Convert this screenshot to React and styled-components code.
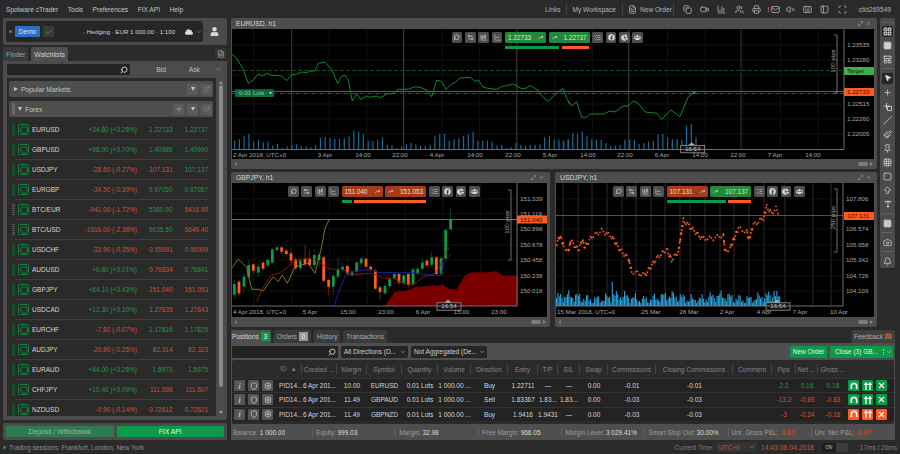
import styled, { createGlobalStyle } from "styled-components";
import {
  Search, Settings2, ChartCandlestick, ChartLine, ListChecks, Copy, Video, Users, Printer, Mail, VolumeX,
  Keyboard, PanelLeft, Plus, X, Check, ChevronDown, Bell, Camera, Type, ArrowBigUp, Square, Pin, Slash,
  LayoutGrid, Shield, Settings, MousePointer2, Grid3x3, LayoutPanelTop, Paintbrush, ExternalLink, FileText,
  Maximize2, BarChart3, TrendingUp, Scan, MessageSquare,
} from "lucide-react";
import { FaFacebook, FaChartPie, FaUsers, FaUser, FaCloud } from "react-icons/fa";

const GREEN = "#209a46";
const RED = "#d84e2c";
const BRIGHT_GREEN = "#0a9a4a";
const ORANGE = "#ff5a1f";

const GlobalStyle = createGlobalStyle`
  html, body {
    margin: 0;
    padding: 0;
    overflow: hidden;
    background: #2a2a2a;
  }
  * { box-sizing: border-box; }
`;

const Page = styled.div`
  width: 900px;
  height: 454px;
  display: flex;
  flex-direction: column;
  background: #2a2a2a;
  color: #c8c8c8;
  font-family: "Liberation Sans", Arial, sans-serif;
  font-size: 6.5px;
  overflow: hidden;
`;

/* top menu */
const MenuBar = styled.div`
  height: 18px;
  display: flex;
  align-items: center;
  padding: 0 9px 0 6px;
  font-size: 6.6px;
  color: #c4c4c4;
`;

const MenuLeft = styled.div`
  display: flex;
  gap: 9.5px;
`;

const MenuRight = styled.div`
  margin-left: auto;
  display: flex;
  align-items: center;
  color: #b4b4b4;
`;

const MenuText = styled.span`
  display: flex;
  align-items: center;
  gap: 3px;
  margin-right: ${(p) => p.$mr || 0}px;
  margin-left: ${(p) => p.$ml || 0}px;
`;

const MenuSep = styled.span`
  width: 1px;
  height: 12px;
  background: #444;
  margin-right: 5px;
`;

const MenuIcon = styled.span`
  width: 17.2px;
  display: flex;
  justify-content: center;
  align-items: center;
  color: #b8b8b8;
`;

const AlertMark = styled.b`
  color: ${RED};
  font-size: 8px;
  margin-right: 1px;
`;

/* main layout */
const Main = styled.div`
  height: 422px;
  display: flex;
  padding-left: 3px;
`;

const LeftCol = styled.div`
  width: 224px;
  display: flex;
  flex-direction: column;
  margin-right: 4px;
`;

const CenterCol = styled.div`
  width: 664px;
  display: flex;
  flex-direction: column;
`;

const AccountBar = styled.div`
  height: 27px;
  background: #4b4b4b;
  border-radius: 2px;
  display: flex;
  align-items: center;
  padding: 0 4px 0 3px;
  gap: 3px;
`;

const AccountInner = styled.div`
  width: 197px;
  height: 21px;
  background: #262626;
  border-radius: 2px;
  display: flex;
  align-items: center;
  padding-left: 3px;
  color: #d4d4d4;
  font-size: 6.2px;
`;

const Dot = styled.span`
  width: 3px;
  height: 3px;
  border-radius: 50%;
  background: #11a83e;
  flex: none;
`;

const DemoButton = styled.span`
  width: 25px;
  height: 11px;
  margin-left: 3px;
  background: #2d6fc0;
  border-radius: 1px;
  color: #dce8f6;
  font-size: 6.6px;
  display: flex;
  align-items: center;
  justify-content: center;
`;

const CheckBox = styled.span`
  width: 11px;
  height: 11px;
  margin-left: 3px;
  background: #3a3a3a;
  border-radius: 1px;
  color: #12a548;
  display: flex;
  align-items: center;
  justify-content: center;
`;

const AccountText = styled.span`
  margin-left: 29px;
  width: 102px;
  white-space: nowrap;
`;

const AccountChevron = styled(ChevronDown)`
  margin-left: 3px;
  color: #999;
`;

const AvatarButton = styled.span`
  flex: 1;
  display: flex;
  justify-content: center;
  color: #d8d8d8;
`;

const SideTabs = styled.div`
  margin-top: 2px;
  height: 14px;
  display: flex;
  align-items: flex-end;
  gap: 3px;
`;

const SideTab = styled.div`
  height: 14px;
  padding: 0 3px;
  background: ${(p) => (p.$active ? "#4f4f4f" : "#3a3a3a")};
  color: ${(p) => (p.$active ? "#cfcfcf" : "#a0a0a0")};
  border-radius: 2px 2px 0 0;
  display: flex;
  align-items: center;
  font-size: 6.8px;
`;

const SideCorner = styled.span`
  margin-left: auto;
  margin-right: 1px;
  width: 11px;
  height: 11px;
  margin-bottom: 2px;
  background: #333;
  display: flex;
  align-items: center;
  justify-content: center;
  color: #aaa;
`;

const WatchPanel = styled.div`
  height: 359px;
  background: #4b4b4b;
  padding: 0 2px 4px 4px;
  display: flex;
  flex-direction: column;
`;

const WatchTop = styled.div`
  height: 17px;
  display: grid;
  grid-template-columns: 123px 36px 34px 1fr;
  align-items: center;
  color: #c0c0c0;
`;

const SearchField = styled.div`
  height: 11px;
  background: #232323;
  border-radius: 1px;
  display: flex;
  align-items: center;
  justify-content: flex-end;
  padding-right: 2px;
  color: #ddd;
`;

const Mirror = styled.span`
  display: flex;
  transform: scaleX(-1);
`;

const HeadLabel = styled.span`
  text-align: right;
  padding-right: ${(p) => p.$pr || 0}px;
  font-size: 6.8px;
  color: ${(p) => p.$color || "inherit"};
`;

const WatchBody = styled.div`
  height: 338px;
  display: flex;
`;

const WatchList = styled.div`
  width: 209px;
  background: #2a2a2a;
  padding-top: 3px;
  overflow: hidden;
`;

const GroupRow = styled.div`
  height: 16px;
  margin: 0 3px ${(p) => p.$mb}px 2px;
  background: #4e4e4e;
  border-radius: 2px;
  display: flex;
  align-items: center;
  padding-left: ${(p) => p.$pl}px;
  color: #c2c2c2;
  font-size: 6.8px;
  gap: 3px;
`;

const GroupGrip = styled.span`
  width: 3px;
  height: 12px;
  margin-left: 1px;
  background: #6a6a6a;
`;

const GroupArrow = styled.span`
  width: 0;
  height: 0;
  ${(p) =>
    p.$open
      ? "border-left: 2.5px solid transparent; border-right: 2.5px solid transparent; border-top: 4px solid #c4c4c4;"
      : "border-top: 2.5px solid transparent; border-bottom: 2.5px solid transparent; border-left: 4px solid #c4c4c4;"}
`;

const GroupActions = styled.span`
  margin-left: auto;
  margin-right: 1px;
  display: flex;
  gap: 3px;
`;

const GroupAction = styled.span`
  width: 11px;
  height: 11px;
  background: #5a5a5a;
  border-radius: 1px;
  display: flex;
  align-items: center;
  justify-content: center;
  color: #8c8c8c;
`;

const SymbolRow = styled.div`
  position: relative;
  height: 20px;
  margin: 0 8px 0 5px;
  display: grid;
  grid-template-columns: 3px 17px 1fr 60px 35.5px 35.5px;
  align-items: center;
  &::after {
    content: "";
    position: absolute;
    left: 3px;
    right: 0;
    bottom: 0;
    height: 1px;
    background: #3e3e3e;
  }
`;

const Grip = styled.span`
  width: 2.5px;
  height: 12px;
  background: ${(p) => (p.$dim ? "repeating-linear-gradient(#555 0 1px, #333 1px 2px)" : "#1c4a26")};
`;

const SymbolIcon = styled.span`
  width: 11px;
  height: 11px;
  margin-left: 3px;
  border: 1px solid #14803c;
  border-radius: 1.5px;
  display: flex;
  align-items: center;
  justify-content: center;
  &::before {
    content: "";
    width: 6px;
    height: 6px;
    border: 1px solid #14803c;
    border-radius: 50%;
  }
`;

const SymbolName = styled.span`
  color: #d4d4d4;
`;

const Quote = styled.span`
  text-align: right;
  color: ${(p) => (p.$up ? GREEN : RED)};
  white-space: nowrap;
`;

const ScrollTrack = styled.div`
  flex: 1;
  display: flex;
  flex-direction: column;
  align-items: center;
  padding-top: 3px;
  color: #999;
`;

const ScrollThumb = styled.div`
  width: 4px;
  height: 302px;
  margin-top: 1px;
  background: #8a8a8a;
  border-radius: 2px;
`;

const ScrollArrow = styled.span`
  width: 0;
  height: 0;
  border-left: 2px solid transparent;
  border-right: 2px solid transparent;
  ${(p) => (p.$down ? "border-top: 3px solid #999; margin-top: auto; margin-bottom: 2px;" : "border-bottom: 3px solid #999;")}
`;

const DepositBar = styled.div`
  margin-top: 3px;
  height: 17px;
  background: #4b4b4b;
  border-radius: 2px;
  padding: 3px;
  display: flex;
  gap: 3px;
`;

const BigButton = styled.div`
  flex: 1;
  background: ${(p) => (p.$dim ? "#2e7a52" : BRIGHT_GREEN)};
  color: ${(p) => (p.$dim ? "#8fb8a0" : "#e4f4ea")};
  display: flex;
  align-items: center;
  justify-content: center;
  border-radius: 1px;
  font-size: 6.8px;
`;

/* chart panels */
const TopArea = styled.div`
  height: 310px;
  display: flex;
  gap: 3px;
  align-items: flex-start;
`;

const ChartsCol = styled.div`
  width: 646px;
  display: flex;
  flex-direction: column;
  gap: 3px;
`;

const ChartsRow = styled.div`
  display: flex;
  gap: 5px;
`;

const ChartPanel = styled.div`
  width: ${(p) => p.$w}px;
  background: #4d4d4d;
  border-radius: 2px;
  padding: 0 3px 0 1px;
  display: flex;
  flex-direction: column;
`;

const PanelTitle = styled.div`
  height: 11px;
  padding: 0 3px 0 4px;
  display: flex;
  align-items: center;
  color: #d8d8d8;
  font-size: 6.8px;
`;

const PanelControls = styled.span`
  margin-left: auto;
  display: flex;
  gap: 3px;
  color: #bbb;
`;

const ChartArea = styled.div`
  position: relative;
  height: ${(p) => p.$h}px;
  background: #000;
`;

const ChartSvg = styled.svg`
  display: block;
  text {
    font-family: "Liberation Sans", Arial, sans-serif;
    font-size: 6.2px;
    fill: #a8a8a8;
  }
`;

const TagText = styled.text`
  && {
    fill: ${(p) => p.$fill};
  }
`;

const ChartScroll = styled.div`
  height: 10px;
  display: flex;
  align-items: center;
  padding: 0 1px 0 2px;
`;

const ScrollHandle = styled.span`
  margin-left: auto;
  width: 10px;
  height: 4px;
  margin-right: 2px;
  background: #7d7d7d;
  border-radius: 2px;
`;

const SideArrow = styled.span`
  width: 0;
  height: 0;
  border-top: 2px solid transparent;
  border-bottom: 2px solid transparent;
  ${(p) => (p.$right ? "border-left: 3px solid #8a8a8a;" : "border-right: 3px solid #777;")}
`;

const Overlay = styled.div`
  position: absolute;
  left: ${(p) => p.$left}px;
  top: 3px;
  display: flex;
  align-items: flex-start;
  gap: 2.6px;
`;

const ToolButton = styled.span`
  width: 10.8px;
  height: 10.8px;
  background: #4e4e4e;
  border-radius: 1.5px;
  display: flex;
  align-items: center;
  justify-content: center;
  color: #d4d4d4;
`;

const PriceStack = styled.div`
  display: flex;
  flex-direction: column;
  gap: 3px;
`;

const PriceRow = styled.div`
  display: flex;
  gap: 2.6px;
`;

const PriceButton = styled.span`
  width: 41px;
  height: 11px;
  background: ${(p) => (p.$red ? "#a83a18" : "#24883c")};
  border-radius: 1.5px;
  color: #d8e8d8;
  display: flex;
  flex-direction: ${(p) => (p.$flip ? "row-reverse" : "row")};
  align-items: center;
  justify-content: space-between;
  padding: 0 3px;
  font-size: 6.4px;
`;

const PriceBars = styled.div`
  display: flex;
  gap: 2.6px;
`;

const MiniBar = styled.span`
  height: 2.5px;
  width: ${(p) => p.$w}px;
  background: ${(p) => (p.$orange ? ORANGE : BRIGHT_GREEN)};
`;

/* right toolbar */
const RightTools = styled.div`
  width: 15px;
  height: 250px;
  background: #4b4b4b;
  border-radius: 2px;
  display: flex;
  flex-direction: column;
  align-items: center;
  padding-top: 3px;
`;

const RightSep = styled.span`
  width: 11px;
  height: 1px;
  background: #606060;
  margin: ${(p) => p.$m || 2}px 0;
  flex: none;
`;

const RightTool = styled.span`
  width: 11px;
  height: ${(p) => (p.$selected ? 11 : 14)}px;
  margin: ${(p) => (p.$selected ? "1.5px 0" : "0")};
  background: ${(p) => (p.$selected ? "#262626" : "transparent")};
  border-radius: 1px;
  display: flex;
  align-items: center;
  justify-content: center;
  color: #cfcfcf;
  flex: none;
`;

/* bottom panel */
const BottomTabs = styled.div`
  margin-top: 2px;
  height: 13px;
  display: flex;
  gap: 3px;
`;

const BottomTab = styled.div`
  height: 13px;
  padding: 0 ${(p) => p.$px || 3}px;
  background: ${(p) => (p.$active ? "#4f4f4f" : "#3a3a3a")};
  color: ${(p) => (p.$active ? "#d8d8d8" : "#aaa")};
  border-radius: 2px 2px 0 0;
  display: flex;
  align-items: center;
  gap: 2px;
  font-size: 6.6px;
`;

const CountBadge = styled.span`
  width: 9px;
  height: 9px;
  background: ${(p) => (p.$grey ? "#999" : BRIGHT_GREEN)};
  color: ${(p) => (p.$grey ? "#eee" : "#e8f8e8")};
  display: flex;
  align-items: center;
  justify-content: center;
`;

const FeedbackTab = styled(BottomTab)`
  margin-left: auto;
  width: 43px;
  background: #3f3f3f;
`;

const FeedbackIcon = styled(MessageSquare)`
  color: #4aa860;
  fill: #b8452a;
`;

const BottomPanel = styled.div`
  height: 97px;
  background: #4f4f4f;
  display: flex;
  flex-direction: column;
`;

const PosToolbar = styled.div`
  height: 17px;
  display: flex;
  align-items: center;
  padding: 0 2px 0 1px;
  gap: 3px;
`;

const PosSearch = styled(SearchField)`
  width: 106px;
  height: 12px;
`;

const DropDown = styled.div`
  width: ${(p) => p.$w}px;
  height: 12px;
  background: #262626;
  border-radius: 1px;
  color: #cfcfcf;
  display: flex;
  align-items: center;
  justify-content: space-between;
  padding: 0 2px 0 3px;
`;

const NewOrder = styled.div`
  margin-left: auto;
  width: 37px;
  height: 12px;
  background: ${BRIGHT_GREEN};
  color: #e4f4ea;
  display: flex;
  align-items: center;
  justify-content: center;
  border-radius: 1px;
`;

const CloseAll = styled.div`
  width: 63px;
  height: 12px;
  background: ${BRIGHT_GREEN};
  color: #e4f4ea;
  display: flex;
  align-items: center;
  border-radius: 1px;
`;

const CloseLabel = styled.span`
  flex: 1;
  text-align: center;
`;

const CloseArrow = styled.span`
  width: 10px;
  border-left: 1px dotted #9fdcb8;
  display: flex;
  justify-content: center;
`;

const PosTable = styled.div`
  height: 64px;
  margin: 0 1px 0 1px;
  background: #2a2a2a;
  border-radius: 2px;
  overflow: hidden;
`;

const columns = "70px 35px 30px 35px 36px 33px 37px 30px 20px 22px 28px 48px 77px 39px 24px 22px 30px 1fr";

const HeadRow = styled.div`
  height: 18px;
  display: grid;
  grid-template-columns: ${columns};
  align-items: center;
  color: #858585;
`;

const HeadCell = styled.span`
  height: 10px;
  display: flex;
  align-items: center;
  justify-content: ${(p) => p.$justify || "center"};
  border-right: ${(p) => (p.$noLine ? "none" : "1px solid #454545")};
  padding-right: ${(p) => p.$pr || 0}px;
  white-space: nowrap;
  overflow: hidden;
`;

const PosRow = styled.div`
  height: 14.3px;
  display: grid;
  grid-template-columns: ${columns};
  align-items: center;
  background: #232323;
  border-top: 1px solid #333;
  color: #d4d4d4;
`;

const Cell = styled.span`
  text-align: center;
  white-space: nowrap;
  color: ${(p) => p.$color || "inherit"};
`;

const RowActions = styled.span`
  display: flex;
  align-items: center;
  padding-left: 2px;
  gap: 3px;
  color: #cfcfcf;
`;

const RowTools = styled.span`
  display: flex;
  gap: 3px;
`;

const SmallSquare = styled.span`
  width: 11px;
  height: 11px;
  background: ${(p) => p.$bg || "#555"};
  border-radius: 1px;
  display: flex;
  align-items: center;
  justify-content: center;
  color: ${(p) => (p.$bg ? "#f4f4f4" : "#c4c4c4")};
`;

const InfoGlyph = styled.i`
  font-family: "Liberation Serif", serif;
  font-size: 9px;
  font-weight: bold;
  color: #b8b8b8;
`;

const IdCell = styled.span`
  margin-left: 3px;
`;

const Summary = styled.div`
  flex: 1;
  display: grid;
  grid-template-columns: repeat(8, 83.1px);
  align-items: center;
  padding-top: 1px;
  color: #9c9c9c;
`;

const SummaryItem = styled.span`
  height: 9px;
  display: flex;
  align-items: center;
  gap: 1.5px;
  padding-left: 2px;
  border-right: 1px solid #5f5f5f;
  margin-right: 1px;
  white-space: nowrap;
  &:last-child { border-right: none; }
`;

const SummaryValue = styled.b`
  font-weight: normal;
  color: ${(p) => p.$color || "#dcdcdc"};
`;

/* status bar */
const StatusBar = styled.div`
  height: 14px;
  display: flex;
  align-items: center;
  padding-left: 3px;
  color: #8e8e8e;
`;

const SessionText = styled.span`
  margin-left: 3px;
`;

const StatusRight = styled.div`
  margin-left: auto;
  display: flex;
  align-items: center;
  color: #7e7e7e;
  padding-right: 3px;
`;

const TimeSelect = styled.span`
  width: 41px;
  height: 10px;
  margin-left: 2px;
  background: #333;
  color: ${RED};
  display: flex;
  align-items: center;
  justify-content: space-between;
  padding: 0 2px 0 3px;
`;

const ClockText = styled.span`
  margin-left: 4px;
  color: ${RED};
  font-size: 6.8px;
`;

const ToggleBox = styled.span`
  width: 26px;
  height: 9px;
  margin: 0 12px 0 8px;
  background: #3c3c3c;
  border-radius: 1px;
  display: flex;
  align-items: center;
  color: #ccc;
  font-size: 4.5px;
`;

const ToggleOn = styled.span`
  width: 14px;
  height: 9px;
  background: #1e1e1e;
  text-align: center;
  line-height: 9px;
`;

/* data */
const watchRows = [
  ["EURUSD", "+34.80 (+0.28%)", 1, "1.22733", 1, "1.22737", 1],
  ["GBPUSD", "+98.00 (+0.70%)", 1, "1.40986", 1, "1.40990", 1],
  ["USDJPY", "-28.60 (-0.27%)", 0, "107.131", 0, "107.137", 1],
  ["EURGBP", "-34.50 (-0.39%)", 0, "0.87050", 1, "0.87057", 1],
  ["BTC/EUR", "-941.00 (-1.72%)", 0, "5380.90", 1, "5416.90", 0, true],
  ["BTC/USD", "-1616.00 (-2.38%)", 0, "6635.50", 1, "6649.40", 0, true],
  ["USDCHF", "-33.90 (-0.35%)", 0, "0.95991", 0, "0.95999", 0],
  ["AUDUSD", "+0.80 (+0.01%)", 1, "0.76834", 0, "0.76841", 1],
  ["GBPJPY", "+64.10 (+0.43%)", 1, "151.040", 0, "151.053", 0],
  ["USDCAD", "+12.30 (+0.10%)", 1, "1.27635", 0, "1.27643", 0],
  ["EURCHF", "-7.80 (-0.07%)", 0, "1.17816", 1, "1.17825", 1],
  ["AUDJPY", "-20.80 (-0.25%)", 0, "82.314", 0, "82.323", 0],
  ["EURAUD", "+44.00 (+0.28%)", 1, "1.5973", 1, "1.5975", 1],
  ["CHFJPY", "+10.40 (+0.09%)", 1, "111.598", 0, "111.607", 0],
  ["NZDUSD", "-9.90 (-0.14%)", 0, "0.72612", 0, "0.72621", 0],
];

const positions = [
  { margin: "10.00", symbol: "EURUSD", dir: "Buy", entry: "1.22711", tp: "—", sl: "—", comm: "-0.01", pips: "2.2", net: "0.16", gross: "0.18", up: true },
  { margin: "11.49", symbol: "GBPAUD", dir: "Sell", entry: "1.83367", tp: "1.83...", sl: "1.83...", comm: "-0.03", pips: "-13.2", net: "-0.89", gross: "-0.83", up: false },
  { margin: "11.49", symbol: "GBPNZD", dir: "Buy", entry: "1.9416", tp: "1.9431", sl: "—", comm: "-0.03", pips: "-3", net: "-0.24", gross: "-0.18", up: false, hot: true },
];

const z = (ox, oy, list) => list.map(([x, y]) => [ox + x / 3, oy + y / 3]);
const toPoints = (list) => list.map((p) => p.map((n) => n.toFixed(1)).join(",")).join(" ");

const eurLine = [
  ...z(230, 0, [[5,162],[20,175],[40,208],[55,250],[70,240],[85,222],[97,228],[110,220],[125,226],[155,228],[170,242],[185,224],[200,222],[215,216],[230,218],[240,213],[255,213],[265,190],[285,187],[305,208],[323,250],[335,228],[345,226],[355,240],[367,303],[380,280],[392,298],[410,288],[420,292],[440,288],[452,293],[470,282],[490,280],[505,268],[535,268],[555,260],[570,262],[590,270],[605,290],[620,240],[635,245],[648,268],[665,252],[675,248],[690,234],[720,232],[735,244],[745,240],[760,262],[780,266],[800,268],[815,260],[850,252],[875,266],[890,264],[900,256],[925,272],[940,293],[955,304],[975,284],[998,265],[1010,295],[1020,312]]),
  ...z(560, 0, [[25,305],[35,318],[50,305],[65,352],[80,352],[90,342],[130,342],[150,333],[165,336],[190,318],[205,318],[220,303],[235,310],[255,336],[290,340],[305,358],[333,330],[360,350],[385,290],[402,278]]),
];

const eurVols = [25,30,40,45,22,28,20,22,10,15,3,8,12,14,8,8,6,12,33,36,33,30,30,33,38,55,52,45,25,25,28,35,12,12,3,8,15,18,14,10,9,13,40,45,45,25,30,32,40,45,50,25,25,25,22,10,12,3,5,18,12,10,12,12,14,35,40,28,28,25,28,25,30,48,45,52,40,30,28,28,18,8,10,12,28,28,28,15,18,22,25,44,45,35,30,30,28,70,75,35];

const candles = [
  [13,342,374,"g",330,385],[27,335,370,"o",330,376],[42,320,350,"g",312,368],[56,285,320,"g",270,325],[70,283,302,"o",278,312],[85,290,308,"g",283,322],[99,278,296,"o",272,302],[113,270,286,"g",262,292],[127,238,278,"g",232,284],[141,232,240,"g",228,246],[155,232,245,"o",228,252],[169,242,252,"o",238,262],[183,250,272,"o",238,280],[197,268,295,"o",262,302],[211,272,295,"g",265,302],[225,266,282,"o",225,290],[239,266,285,"o",240,290],[253,255,285,"g",240,292],[267,255,270,"g",245,290],[281,262,332,"o",258,338],[296,330,350,"o",326,375],[310,318,350,"g",312,376],[324,300,320,"g",262,326],[338,290,300,"g",278,306],[352,288,310,"o",284,318],[366,305,315,"g",300,322],[380,278,305,"g",272,312],[394,266,280,"g",262,290],[408,266,290,"o",262,296],[422,290,300,"o",286,305],[436,302,356,"o",298,360],[450,352,366,"o",346,390],[465,348,370,"g",342,376],[479,328,348,"g",322,356],[493,312,325,"g",306,330],[507,312,338,"o",308,344],[521,316,338,"g",312,346],[535,312,345,"o",308,352],[549,298,342,"g",292,348],[563,296,310,"g",290,316],[577,278,296,"g",262,302],[591,272,286,"o",266,292],[605,262,284,"g",246,290],[619,262,312,"o",258,316],[633,265,312,"g",258,318],[647,180,265,"g",176,270],[662,150,178,"g",112,182],
];

const olive = z(230, 170, [[5,295],[25,267],[50,292],[65,358],[85,358],[100,362],[130,320],[145,335],[157,315],[172,340],[195,290],[235,280],[255,310],[275,230],[285,175],[297,150]]);
const redMa = z(230, 170, [[80,395],[100,350],[125,315],[150,308],[175,290],[195,272],[230,265],[260,270],[285,290],[300,297],[340,298],[360,315],[420,310],[440,315],[460,325],[490,325],[520,340],[550,345],[580,320],[610,315],[630,290],[650,240],[662,232]]);
const blueMa = z(230, 170, [[312,408],[325,370],[345,320],[370,305],[420,298],[445,308],[550,308],[580,312],[630,317],[645,275],[662,252]]);
const cloud = z(230, 170, [[465,408],[495,365],[530,362],[560,350],[640,346],[660,358],[680,358],[705,315],[725,307],[780,307],[800,303],[820,318],[862,317],[862,408]]);

const usdPath = z(550, 170, [[18,225],[30,198],[42,230],[55,245],[62,212],[85,240],[97,210],[105,232],[125,200],[155,182],[185,200],[210,240],[235,265],[245,305],[285,315],[320,265],[350,238],[365,270],[385,245],[400,150],[425,175],[440,190],[455,205],[490,205],[520,195],[525,245],[540,235],[565,175],[590,185],[597,208],[610,165],[640,145],[650,110],[665,130],[678,115],[688,130]]);

const usdDots = [];
for (let i = 0; i < usdPath.length - 1; i++) {
  const [x1, y1] = usdPath[i];
  const [x2, y2] = usdPath[i + 1];
  const steps = Math.max(2, Math.round(Math.hypot(x2 - x1, y2 - y1) / 2));
  for (let s = 0; s < steps; s++) {
    const t = s / steps;
    const k = usdDots.length;
    usdDots.push([x1 + (x2 - x1) * t, y1 + (y2 - y1) * t + Math.sin(k * 1.7) * 2]);
  }
}

const usdVols = [];
for (let i = 0; i < 165; i++) {
  const base = 8 + 3.5 * Math.sin(i * 0.9) + 2.5 * Math.sin(i * 2.3) + 2 * Math.sin(i * 0.17);
  usdVols.push(i === 41 ? 24 : i === 160 ? 15 : Math.max(3, base));
}

const range = (from, to, step) => {
  const out = [];
  for (let v = from; v < to; v += step) out.push(v);
  return out;
};

/* small drawings with no matching icon in the packages */
const ArchIcon = () => (
  <svg width="8" height="8" viewBox="0 0 8 8" fill="none" stroke="currentColor" strokeWidth="1.7">
    <path d="M1.3 7V4a2.7 2.7 0 0 1 5.4 0v3" />
  </svg>
);

const TwoArrowsIcon = () => (
  <svg width="8" height="8" viewBox="0 0 8 8" fill="none" stroke="currentColor" strokeWidth="1.4">
    <path d="M2 8V1M.4 2.8 2 1l1.6 1.8M6 8V1M4.4 2.8 6 1l1.6 1.8" />
  </svg>
);

const PlusBoxIcon = () => (
  <svg width="9" height="9" viewBox="0 0 9 9" fill="none" stroke="currentColor" strokeWidth="0.9">
    <path d="M3.5 1v6M.5 4h6M4.5 4.5h4v4h-4z" />
  </svg>
);

/* chart frame shared by the three panels */
const ChartFrame = ({ x, y, w, h, right, bottom, ticks, labels, majors, minors, majorColor = "#444", labelY, children }) => (
  <ChartSvg width={w} height={h} viewBox={`${x} ${y} ${w} ${h}`}>
    {minors.map((v) => (
      <line key={v} x1={v} x2={v} y1={y} y2={bottom} stroke="#181818" strokeWidth="0.7" />
    ))}
    {ticks.map(([ty]) => (
      <line key={ty} x1={x} x2={right} y1={ty} y2={ty} stroke="#181818" strokeWidth="0.7" />
    ))}
    {majors.map((v) => (
      <line key={v} x1={v} x2={v} y1={y} y2={bottom} stroke={majorColor} strokeWidth="0.8" />
    ))}
    {children}
    <line x1={x} x2={right} y1={bottom} y2={bottom} stroke="#8a8a8a" strokeWidth="0.8" />
    <line x1={right} x2={right} y1={y} y2={bottom} stroke="#8a8a8a" strokeWidth="0.8" />
    {ticks.map(([ty, label]) =>
      label ? (
        <text key={label} x={right + 3} y={ty + 2.2}>
          {label}
        </text>
      ) : null
    )}
    {labels.map(([lx, label, start]) => (
      <text key={`${lx}${label}`} x={lx} y={labelY} textAnchor={start ? "start" : "middle"}>
        {label}
      </text>
    ))}
  </ChartSvg>
);

const PriceTag = ({ x, y, w, bg, label }) => (
  <>
    <rect x={x} y={y} width={w} height={8} fill={bg} />
    <TagText x={x + 3} y={y + 6} $fill="#2a1208">
      {label}
    </TagText>
  </>
);

const PipsBracket = ({ x, y1, y2, label }) => (
  <>
    <polyline points={`${x - 3},${y1} ${x},${y1} ${x},${y2} ${x - 3},${y2}`} fill="none" stroke="#8a8a8a" strokeWidth="0.8" />
    <text transform={`translate(${x - 2} ${(y1 + y2) / 2 - 3}) rotate(-90)`} textAnchor="middle">
      {label}
    </text>
  </>
);

const TimeTag = ({ x, y }) => (
  <>
    <polygon points={`${x + 11},${y - 3} ${x + 15},${y} ${x + 7},${y}`} fill="#aaa" />
    <rect x={x} y={y} width={24} height={7.4} fill="#111" stroke="#a8a8a8" strokeWidth="0.7" />
    <TagText x={x + 12} y={y + 5.6} textAnchor="middle" $fill="#c8c8c8">
      16:54
    </TagText>
  </>
);

const PriceButtons = ({ bid, ask, bidRed, askRed }) => (
  <PriceRow>
    <PriceButton $red={bidRed}>
      {bid}
      <TrendingUp size={5} strokeWidth={3} />
    </PriceButton>
    <PriceButton $red={askRed} $flip>
      {ask}
      <TrendingUp size={5} strokeWidth={3} />
    </PriceButton>
  </PriceRow>
);

const ChartTools = ({ left, bid, ask, bidRed, askRed, green, orange }) => (
  <Overlay $left={left}>
    <ToolButton><Mirror><Search size={7} strokeWidth={2.6} /></Mirror></ToolButton>
    <ToolButton><Settings2 size={7} strokeWidth={2} /></ToolButton>
    <ToolButton><ChartCandlestick size={7} strokeWidth={2} /></ToolButton>
    <ToolButton><ChartLine size={7} strokeWidth={2} /></ToolButton>
    <PriceStack>
      <PriceButtons bid={bid} ask={ask} bidRed={bidRed} askRed={askRed} />
      <PriceBars>
        <MiniBar $w={green} />
        <MiniBar $w={orange} $orange />
      </PriceBars>
    </PriceStack>
    <ToolButton><ListChecks size={7} strokeWidth={2} /></ToolButton>
    <ToolButton><FaFacebook size={7} /></ToolButton>
    <ToolButton><FaChartPie size={7} /></ToolButton>
    <ToolButton><FaUsers size={7} /></ToolButton>
  </Overlay>
);

const PanelHead = ({ title }) => (
  <PanelTitle>
    {title}
    <PanelControls>
      <Maximize2 size={5} />
      <X size={5} />
    </PanelControls>
  </PanelTitle>
);

const PanelScroll = () => (
  <ChartScroll>
    <SideArrow />
    <ScrollHandle />
    <SideArrow $right />
  </ChartScroll>
);

const EurChart = () => (
  <ChartPanel $w={646}>
    <PanelHead title="EURUSD, h1" />
    <ChartArea $h={130}>
      <ChartFrame
        x={232} y={29} w={642} h={130} right={844} bottom={149.5} labelY={157}
        minors={range(254, 844, 37.6)}
        majors={[291.7, 403.5, 516.7, 628.5, 741]}
        ticks={[[45,"1.23535"],[60,"1.23280"],[75,""],[90,""],[104,"1.22515"],[119,"1.22260"],[134,"1.22005"]]}
        labels={[[233,"2 Apr 2018, UTC+0",true],[325,"3 Apr"],[363,"14:00"],[400,"22:00"],[437,"4 Apr"],[475,"14:00"],[513,"22:00"],[550,"5 Apr"],[588,"14:00"],[625,"22:00"],[662,"6 Apr"],[700,"14:00"],[738,"22:00"],[775,"7 Apr"],[813,"14:00"]]}
      >
        {eurVols.map((v, i) => {
          const bx = i < 71 ? 234 + i * 4.77 : 562.7 + (i - 71) * 4.74;
          return <rect key={i} x={bx} y={149 - v / 3} width="1.2" height={v / 3} fill="#1c6a94" />;
        })}
        <line x1="232" x2="844" y1="70.5" y2="70.5" stroke="#1c5a2a" strokeDasharray="4 2" strokeWidth="0.8" />
        <line x1="232" x2="844" y1="93.5" y2="93.5" stroke="#1f7a34" strokeDasharray="4 1.5 1 1.5" strokeWidth="0.8" />
        <line x1="232" x2="844" y1="91.5" y2="91.5" stroke="#a8431c" strokeWidth="1" />
        <polyline points={toPoints(eurLine)} fill="none" stroke="#118a2a" strokeWidth="1" />
        <rect x="693" y="91.7" width="2.4" height="2.4" fill="#1ea04a" />
        <rect x="235" y="89.3" width="39" height="7.6" rx="1" fill="#0f6b3a" />
        <TagText x="239" y="95.3" $fill="#9ac8a8">0.01 Lots</TagText>
        <polygon points="269,92 272,92 270.5,94.5" fill="#c8e0c8" />
        <PipsBracket x={837} y1={35} y2={93} label="100 pips" />
        <PriceTag x={844} y={67} w={30} bg="#3cb04c" label="Target" />
        <PriceTag x={844} y={88} w={30} bg={ORANGE} label="1.22733" />
        <TimeTag x={680.7} y={145.4} />
      </ChartFrame>
      <ChartTools left={219.5} bid="1.22733" ask="1.22737" green={54} orange={27.5} />
    </ChartArea>
    <PanelScroll />
  </ChartPanel>
);

const GbpChart = () => (
  <ChartPanel $w={319}>
    <PanelHead title="GBPJPY, h1" />
    <ChartArea $h={134}>
      <ChartFrame
        x={232} y={183} w={315} h={134} right={517} bottom={306} labelY={314}
        minors={range(254, 517, 37.8)}
        majors={[]}
        ticks={[[198.7,"151.339"],[213.5,"151.119"],[229,"150.898"],[245,"150.678"],[260,"150.458"],[275.7,"150.238"],[291,"150.018"]]}
        labels={[[233,"4 Apr 2018, UTC+0",true],[310,"5 Apr"],[348,"15:00"],[386,"23:00"],[423,"6 Apr"],[461.5,"15:00"],[499,"23:00"]]}
      >
        <polygon points={toPoints(cloud)} fill="#7a0000" />
        <line x1="232" x2="517" y1="219.5" y2="219.5" stroke="#7c7a20" strokeWidth="1" />
        {candles.map(([cx, top, bot, color, hi, lo]) => {
          const px = 230 + cx / 3;
          const fill = color === "g" ? BRIGHT_GREEN : ORANGE;
          return (
            <g key={cx}>
              <line x1={px} x2={px} y1={170 + hi / 3} y2={170 + lo / 3} stroke={fill} strokeWidth="0.6" opacity="0.7" />
              <rect x={px - 1.4} y={170 + top / 3} width="2.8" height={(bot - top) / 3} fill={fill} />
            </g>
          );
        })}
        <polyline points={toPoints(olive)} fill="none" stroke="#8a8420" strokeWidth="0.9" />
        <polyline points={toPoints(redMa)} fill="none" stroke="#8e1c12" strokeWidth="0.9" />
        <polyline points={toPoints(blueMa)} fill="none" stroke="#1224a8" strokeWidth="1" />
        <PipsBracket x={511} y1={190} y2={260} label="100 pips" />
        <PriceTag x={517} y={215.5} w={30} bg={ORANGE} label="151.040" />
        <TimeTag x={437} y={302.8} />
      </ChartFrame>
      <ChartTools left={56} bid="151.040" ask="151.053" bidRed askRed green={10} orange={72} />
    </ChartArea>
    <PanelScroll />
  </ChartPanel>
);

const UsdChart = () => (
  <ChartPanel $w={322}>
    <PanelHead title="USDJPY, h1" />
    <ChartArea $h={134}>
      <ChartFrame
        x={556} y={183} w={318} h={134} right={843} bottom={306} labelY={314}
        minors={[]}
        majorColor="#333"
        majors={[563, 578, 592, 607, 622, 636, 651, 665, 680, 690, 705, 720, 734, 749, 764, 785, 813, 831]}
        ticks={[[198.7,"107.806"],[229,"106.574"],[245,"105.958"],[260,"105.342"],[275.7,"104.726"],[291,"104.109"]]}
        labels={[[557,"15 Mar 2018, UTC+0",true],[651,"25 Mar"],[689,"28 Mar"],[727,"2 Apr"],[764,"4 Apr"],[800,"7 Apr"],[839,"10 Apr"]]}
      >
        {usdVols.map((v, i) => (
          <rect key={i} x={556 + i * 1.36} y={306 - v} width="1.1" height={v} fill="#27a3dc" />
        ))}
        <line x1="556" x2="843" y1="215.5" y2="215.5" stroke="#a8431c" strokeWidth="0.9" />
        {usdDots.map(([dx, dy], i) => (
          <circle key={i} cx={dx} cy={dy} r="0.95" fill={ORANGE} />
        ))}
        <PipsBracket x={837} y1={189} y2={252} label="250 pips" />
        <PriceTag x={844} y={212} w={30} bg={ORANGE} label="107.131" />
        <TimeTag x={766} y={302.8} />
      </ChartFrame>
      <ChartTools left={57} bid="107.131" ask="107.137" bidRed green={59} orange={22.5} />
    </ChartArea>
    <PanelScroll />
  </ChartPanel>
);

const Positions = () => (
  <PosTable>
    <HeadRow>
      <HeadCell $justify="flex-end" $pr={5}>ID &nbsp;&nbsp;▴</HeadCell>
      <HeadCell>Created ...</HeadCell>
      <HeadCell>Margin</HeadCell>
      <HeadCell>Symbol</HeadCell>
      <HeadCell>Quantity</HeadCell>
      <HeadCell>Volume</HeadCell>
      <HeadCell>Direction</HeadCell>
      <HeadCell>Entry</HeadCell>
      <HeadCell>T/P</HeadCell>
      <HeadCell>S/L</HeadCell>
      <HeadCell>Swap</HeadCell>
      <HeadCell>Commissions</HeadCell>
      <HeadCell>Closing Commissions</HeadCell>
      <HeadCell>Comment</HeadCell>
      <HeadCell>Pips</HeadCell>
      <HeadCell>Net ...</HeadCell>
      <HeadCell $noLine>Gross ...</HeadCell>
      <HeadCell $noLine />
    </HeadRow>
    {positions.map((p) => {
      const tint = p.up ? GREEN : RED;
      const actionBg = p.hot ? ORANGE : BRIGHT_GREEN;
      return (
        <PosRow key={p.symbol}>
          <RowActions>
            <RowTools>
              <SmallSquare><InfoGlyph>i</InfoGlyph></SmallSquare>
              <SmallSquare><Shield size={8} strokeWidth={2.4} /></SmallSquare>
              <SmallSquare><Settings size={8} strokeWidth={2.6} /></SmallSquare>
            </RowTools>
            <IdCell>PID14...</IdCell>
          </RowActions>
          <Cell>6 Apr 201...</Cell>
          <Cell>{p.margin}</Cell>
          <Cell>{p.symbol}</Cell>
          <Cell>0.01 Lots</Cell>
          <Cell>1 000.00 ...</Cell>
          <Cell>{p.dir}</Cell>
          <Cell>{p.entry}</Cell>
          <Cell>{p.tp}</Cell>
          <Cell>{p.sl}</Cell>
          <Cell>0.00</Cell>
          <Cell>{p.comm}</Cell>
          <Cell>{p.comm}</Cell>
          <Cell />
          <Cell $color={tint}>{p.pips}</Cell>
          <Cell $color={tint}>{p.net}</Cell>
          <Cell $color={tint}>{p.gross}</Cell>
          <RowTools>
            <SmallSquare $bg={actionBg}><ArchIcon /></SmallSquare>
            <SmallSquare $bg={actionBg}><TwoArrowsIcon /></SmallSquare>
            <SmallSquare $bg={actionBg}><X size={9} strokeWidth={3} /></SmallSquare>
          </RowTools>
        </PosRow>
      );
    })}
  </PosTable>
);

export default function App() {
  return (
    <Page>
      <GlobalStyle />
      <MenuBar>
        <MenuLeft>
          <span>Spotware cTrader</span>
          <span>Tools</span>
          <span>Preferences</span>
          <span>FIX API</span>
          <span>Help</span>
        </MenuLeft>
        <MenuRight>
          <MenuText $mr={6}>Links</MenuText>
          <MenuSep />
          <MenuText $mr={6}>My Workspace</MenuText>
          <MenuSep />
          <MenuText $mr={1}><FileText size={9} />New Order</MenuText>
          <MenuSep />
          <MenuIcon><Copy size={9} /></MenuIcon>
          <MenuIcon><Video size={9} /></MenuIcon>
          <MenuIcon><BarChart3 size={9} /></MenuIcon>
          <MenuIcon><Users size={9} /></MenuIcon>
          <MenuIcon><Printer size={9} /></MenuIcon>
          <MenuIcon><AlertMark>!</AlertMark><Mail size={9} /></MenuIcon>
          <MenuIcon><VolumeX size={9} /></MenuIcon>
          <MenuIcon><Keyboard size={9} /></MenuIcon>
          <MenuIcon><PanelLeft size={9} /></MenuIcon>
          <MenuIcon><Scan size={9} /></MenuIcon>
          <MenuText $ml={8}>ctid269549</MenuText>
        </MenuRight>
      </MenuBar>

      <Main>
        <LeftCol>
          <AccountBar>
            <AccountInner>
              <Dot />
              <DemoButton>Demo</DemoButton>
              <CheckBox><Check size={8} strokeWidth={3} /></CheckBox>
              <AccountText>· Hedging · EUR 1 000.00 · 1:100</AccountText>
              <FaCloud size={8} color="#d8d8d8" />
              <AccountChevron size={6} />
            </AccountInner>
            <AvatarButton><FaUser size={9} /></AvatarButton>
          </AccountBar>

          <SideTabs>
            <SideTab>Finder</SideTab>
            <SideTab $active>Watchlists</SideTab>
            <SideCorner><FileText size={8} /></SideCorner>
          </SideTabs>

          <WatchPanel>
            <WatchTop>
              <SearchField><Mirror><Search size={8} strokeWidth={2.6} /></Mirror></SearchField>
              <HeadLabel>Bid</HeadLabel>
              <HeadLabel>Ask</HeadLabel>
              <HeadLabel $pr={3} $color="#999"><ChevronDown size={7} /></HeadLabel>
            </WatchTop>
            <WatchBody>
              <WatchList>
                <GroupRow $pl={5} $mb={4}>
                  <GroupArrow />
                  Popular Markets
                  <GroupActions>
                    <GroupAction><GroupArrow $open /></GroupAction>
                    <GroupAction><ExternalLink size={6} /></GroupAction>
                  </GroupActions>
                </GroupRow>
                <GroupRow $pl={2} $mb={2.5}>
                  <GroupGrip />
                  <GroupArrow $open />
                  Forex
                  <GroupActions>
                    <GroupAction><Plus size={8} strokeWidth={3} /></GroupAction>
                    <GroupAction><GroupArrow $open /></GroupAction>
                    <GroupAction><ExternalLink size={6} /></GroupAction>
                  </GroupActions>
                </GroupRow>
                {watchRows.map(([name, change, changeUp, bid, bidUp, ask, askUp, dim]) => (
                  <SymbolRow key={name}>
                    <Grip $dim={dim} />
                    <SymbolIcon />
                    <SymbolName>{name}</SymbolName>
                    <Quote $up={changeUp}>{change}</Quote>
                    <Quote $up={bidUp}>{bid}</Quote>
                    <Quote $up={askUp}>{ask}</Quote>
                  </SymbolRow>
                ))}
              </WatchList>
              <ScrollTrack>
                <ScrollArrow />
                <ScrollThumb />
                <ScrollArrow $down />
              </ScrollTrack>
            </WatchBody>
          </WatchPanel>

          <DepositBar>
            <BigButton $dim>Deposit / Withdrawal</BigButton>
            <BigButton>FIX API</BigButton>
          </DepositBar>
        </LeftCol>

        <CenterCol>
          <TopArea>
            <ChartsCol>
              <EurChart />
              <ChartsRow>
                <GbpChart />
                <UsdChart />
              </ChartsRow>
            </ChartsCol>
            <RightTools>
              <RightSep $m={1} />
              <RightTool $selected><LayoutGrid size={9} strokeWidth={3} /></RightTool>
              <RightTool><Square size={9} fill="#cfcfcf" /></RightTool>
              <RightTool><LayoutPanelTop size={9} strokeWidth={2.6} /></RightTool>
              <RightSep />
              <RightTool $selected><MousePointer2 size={8} fill="#eee" /></RightTool>
              <RightTool><Plus size={9} /></RightTool>
              <RightTool><PlusBoxIcon /></RightTool>
              <RightTool><Slash size={9} /></RightTool>
              <RightTool><Paintbrush size={9} /></RightTool>
              <RightTool><Pin size={9} /></RightTool>
              <RightTool><Grid3x3 size={9} /></RightTool>
              <RightTool><Square size={9} /></RightTool>
              <RightTool><ArrowBigUp size={9} /></RightTool>
              <RightTool><Type size={8} strokeWidth={3} /></RightTool>
              <RightSep />
              <RightTool><Square size={9} fill="#c8c8c8" /></RightTool>
              <RightSep />
              <RightTool><Camera size={9} /></RightTool>
              <RightSep />
              <RightTool><Bell size={9} /></RightTool>
            </RightTools>
          </TopArea>

          <BottomTabs>
            <BottomTab $active $px={1}>Positions <CountBadge>3</CountBadge></BottomTab>
            <BottomTab>Orders <CountBadge $grey>0</CountBadge></BottomTab>
            <BottomTab>History</BottomTab>
            <BottomTab>Transactions</BottomTab>
            <FeedbackTab $px={2}>Feedback <FeedbackIcon size={7} /></FeedbackTab>
          </BottomTabs>
          <BottomPanel>
            <PosToolbar>
              <PosSearch><Mirror><Search size={8} strokeWidth={2.6} /></Mirror></PosSearch>
              <DropDown $w={67}>All Directions (D... <ChevronDown size={6} /></DropDown>
              <DropDown $w={76}>Not Aggregated (De... <ChevronDown size={6} /></DropDown>
              <NewOrder>New Order</NewOrder>
              <CloseAll>
                <CloseLabel>Close (3) GB...</CloseLabel>
                <CloseArrow><ChevronDown size={6} /></CloseArrow>
              </CloseAll>
            </PosToolbar>
            <Positions />
            <Summary>
              <SummaryItem>Balance: <SummaryValue>1 000.00</SummaryValue></SummaryItem>
              <SummaryItem>Equity: <SummaryValue>999.03</SummaryValue></SummaryItem>
              <SummaryItem>Margin: <SummaryValue>32.98</SummaryValue></SummaryItem>
              <SummaryItem>Free Margin: <SummaryValue>966.05</SummaryValue></SummaryItem>
              <SummaryItem>Margin Level: <SummaryValue>3 029.41%</SummaryValue></SummaryItem>
              <SummaryItem>Smart Stop Out: <SummaryValue>30.00%</SummaryValue></SummaryItem>
              <SummaryItem>Unr. Gross P&amp;L: <SummaryValue $color={RED}>-0.83</SummaryValue></SummaryItem>
              <SummaryItem>Unr. Net P&amp;L: <SummaryValue $color={RED}>-0.97</SummaryValue></SummaryItem>
            </Summary>
          </BottomPanel>
        </CenterCol>
      </Main>

      <StatusBar>
        <Dot />
        <SessionText>Trading sessions: Frankfurt, London, New York</SessionText>
        <StatusRight>
          Current Time:
          <TimeSelect>UTC+0 <ChevronDown size={6} color="#aaa" /></TimeSelect>
          <ClockText>14:43 06.04.2018</ClockText>
          <ToggleBox><ToggleOn>ON</ToggleOn></ToggleBox>
          17ms / 26ms
        </StatusRight>
      </StatusBar>
    </Page>
  );
}
